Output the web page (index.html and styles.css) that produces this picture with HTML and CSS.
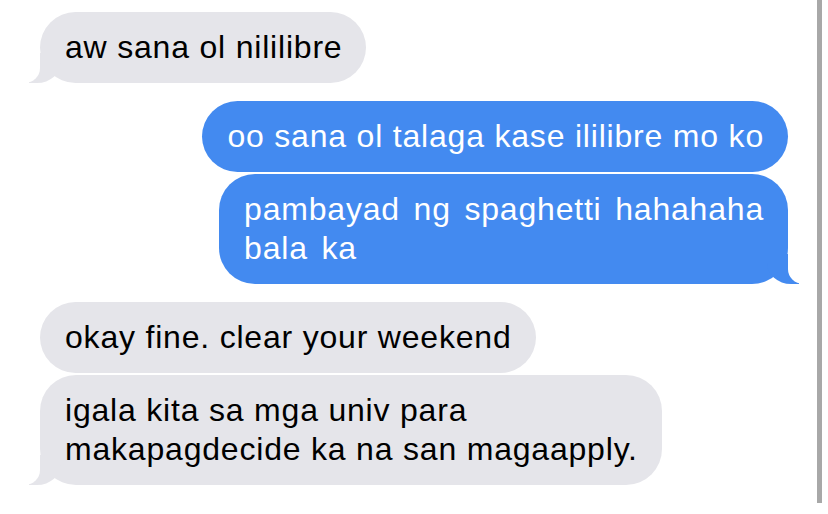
FILE: index.html
```html
<!DOCTYPE html>
<html lang="tl">
<head>
  <meta charset="UTF-8">
  <meta name="viewport" content="width=device-width, initial-scale=1.0">
  <title>Messages</title>
  <link rel="stylesheet" href="styles.css">
</head>
<body>
  <main class="chat">
    <div class="group them">
      <div class="bubble tail">aw sana ol nililibre</div>
    </div>
    <div class="group me">
      <div class="bubble">oo sana ol talaga kase ililibre mo ko</div>
      <div class="bubble tail wide">pambayad ng spaghetti hahahaha<br>bala ka</div>
    </div>
    <div class="group them">
      <div class="bubble">okay fine. clear your weekend</div>
      <div class="bubble tail">igala kita sa mga univ para<br>makapagdecide ka na san magaapply.</div>
    </div>
  </main>
  <div class="scrollbar"></div>
</body>
</html>
```

FILE: styles.css
```css
* {
  margin: 0;
  padding: 0;
  box-sizing: border-box;
}
body {
  font-family: "Liberation Sans", Arial, sans-serif;
  background-color: #fff;
  width: 828px;
  height: 514px;
  overflow: hidden;
  position: relative;
}
.chat {
  display: flex;
  flex-direction: column;
  gap: 18px;
  padding: 12px 40px 0 40px;
}
.group {
  display: flex;
  flex-direction: column;
  gap: 2px;
}
.group.them {
  align-items: flex-start;
}
.group.me {
  align-items: flex-end;
}
.bubble {
  position: relative;
  font-size: 32px;
  letter-spacing: 0.8px;
  line-height: 39px;
  padding: 16px 24px 16px 25px;
  border-radius: 36px;
  white-space: nowrap;
}
.bubble.wide {
  word-spacing: 4px;
}
.them .bubble {
  background-color: #e5e5ea;
  color: #000;
}
.me .bubble {
  background-color: #438af0;
  color: #fff;
}
/* colita de la burbuja */
.bubble.tail::before,
.bubble.tail::after {
  content: "";
  position: absolute;
  bottom: 0;
  height: 30px;
}
.them .bubble.tail::before {
  left: -11px;
  width: 32px;
  background-color: #e5e5ea;
  border-bottom-right-radius: 24px 21px;
}
.them .bubble.tail::after {
  left: -40px;
  width: 40px;
  background-color: #fff;
  border-bottom-right-radius: 15px;
}
.me .bubble.tail::before {
  right: -11px;
  width: 32px;
  background-color: #438af0;
  border-bottom-left-radius: 24px 21px;
}
.me .bubble.tail::after {
  right: -40px;
  width: 40px;
  background-color: #fff;
  border-bottom-left-radius: 15px;
}
.scrollbar {
  position: absolute;
  top: 0;
  left: 817px;
  width: 5px;
  height: 503px;
  background-color: #a8a8a8;
}
```
